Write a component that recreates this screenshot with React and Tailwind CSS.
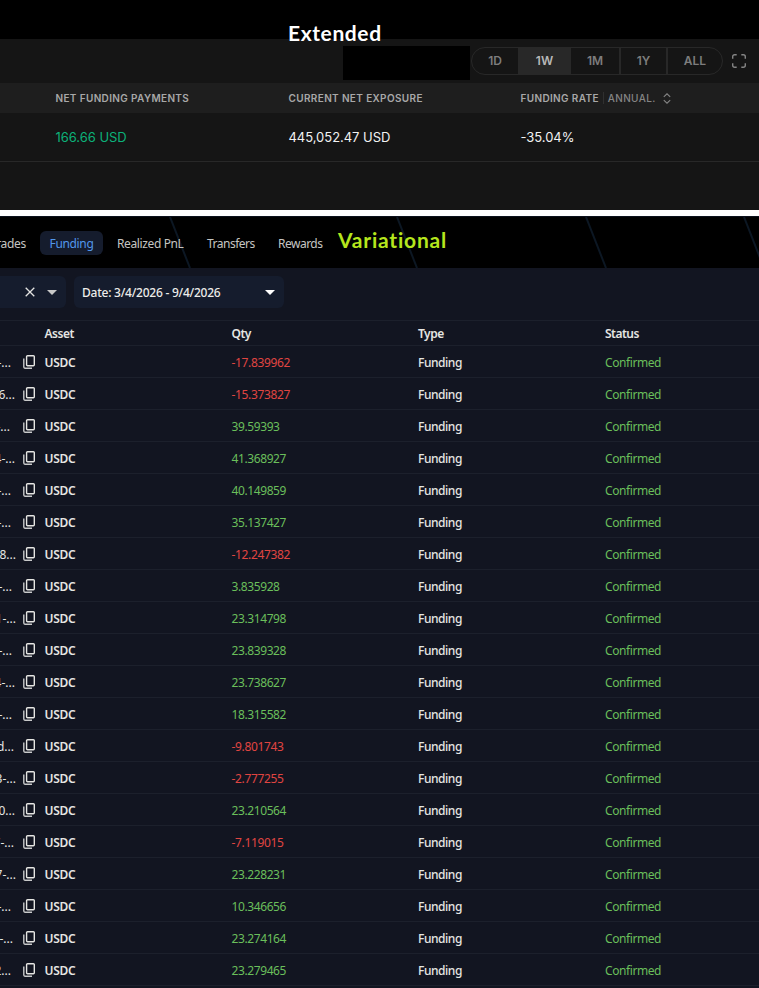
import React from "react";

const ranges = [
  { label: "1D", width: "w-[46px]" },
  { label: "1W", width: "w-[53px]" },
  { label: "1M", width: "w-[48px]" },
  { label: "1Y", width: "w-[47px]" },
  { label: "ALL", width: "w-[56px]" },
];

// end = where the truncated id stops inside its column
const rows = [
  { id: "-...", end: 11, qty: "-17.839962" },
  { id: "6...", end: 15, qty: "-15.373827" },
  { id: "-...", end: 10, qty: "39.59393" },
  { id: "4-...", end: 15, qty: "41.368927" },
  { id: "-...", end: 11, qty: "40.149859" },
  { id: "-...", end: 11, qty: "35.137427" },
  { id: "8...", end: 16, qty: "-12.247382" },
  { id: "-...", end: 12, qty: "3.835928" },
  { id: "1-...", end: 16, qty: "23.314798" },
  { id: "-...", end: 12, qty: "23.839328" },
  { id: "4-...", end: 15, qty: "23.738627" },
  { id: "-...", end: 12, qty: "18.315582" },
  { id: "d...", end: 14, qty: "-9.801743" },
  { id: "3-...", end: 16, qty: "-2.777255" },
  { id: "0...", end: 15, qty: "23.210564" },
  { id: "7-...", end: 14, qty: "-7.119015" },
  { id: "7-...", end: 16, qty: "23.228231" },
  { id: "-...", end: 11, qty: "10.346656" },
  { id: "-...", end: 13, qty: "23.274164" },
  { id: "2...", end: 11, qty: "23.279465" },
];

function CopyIcon() {
  return (
    <svg className="-mt-[2px]" width="13" height="14" viewBox="0 0 13 14" fill="none">
      <rect x="3.6" y="0.7" width="7.7" height="10" rx="0.9" stroke="#e6e6e3" strokeWidth="1.4" />
      <path d="M0.8 3.5V12.1Q0.8 13.2 1.9 13.2H9" stroke="#c8c9ca" strokeWidth="1.4" />
    </svg>
  );
}

function Caret({ className }) {
  return (
    <svg className={className} width="10" height="5" viewBox="0 0 10 5" fill="currentColor">
      <path d="M0 0H10L5 5Z" />
    </svg>
  );
}

function ExtendedPanel() {
  return (
    <section className="h-[210px] bg-[#151515] font-['Inter',sans-serif]">
      <div className="h-[39px] bg-black pl-[288px] pt-[19px]">
        <h2 className="font-['Lato',sans-serif] text-[21px] leading-[27px] font-bold tracking-[0.6px] text-white relative">
          Extended
        </h2>
      </div>

      {/* Range selector */}
      <div className="h-[44px] pt-[7px] flex items-start pl-[343px]">
        <div className="w-[127px] h-[34px] bg-black shrink-0" />
        <div className="ml-px mt-px w-[252px] h-[28px] shrink-0 flex border border-[#282828] rounded-full overflow-hidden">
          {ranges.map((range, i) => (
            <div
              key={range.label}
              className={`${range.width} h-full flex items-center justify-center text-[12px] font-semibold ${
                range.label === "1W"
                  ? "bg-[#282828] text-[#b8b8b8]"
                  : "text-[#7d7d7d]"
              } ${i > 2 ? "border-l-2 border-[#282828]" : ""}`}
            >
              {range.label}
            </div>
          ))}
        </div>
        <svg className="ml-[9px] mt-[8px] shrink-0" width="14" height="14" viewBox="0 0 14 14" fill="none" stroke="#858585" strokeWidth="1.4">
          <path d="M0.7 4.7V2.7Q0.7 0.7 2.7 0.7H4.7M9.3 0.7H11.3Q13.3 0.7 13.3 2.7V4.7M13.3 9.3V11.3Q13.3 13.3 11.3 13.3H9.3M4.7 13.3H2.7Q0.7 13.3 0.7 11.3V9.3" />
        </svg>
      </div>

      <div className="h-[30px] bg-[#1e1e1e] grid grid-cols-[233px_232px_1fr] items-center pl-[55.5px] text-[10px] font-semibold tracking-[0.36px] text-[#a8a8a8] whitespace-nowrap">
        <span>NET FUNDING PAYMENTS</span>
        <span>CURRENT NET EXPOSURE</span>
        <div className="flex items-center">
          <span>FUNDING RATE</span>
          <span className="ml-[4px] w-px h-[12px] bg-[#303030]" />
          <span className="ml-[4px] font-medium text-[#858585]">ANNUAL.</span>
          <svg className="ml-[7px]" width="8" height="11" viewBox="0 0 8 11" fill="none" stroke="#858585" strokeWidth="1.1">
            <path d="M0.8 3.8L4 0.8L7.2 3.8M0.8 7.2L4 10.2L7.2 7.2" />
          </svg>
        </div>
      </div>

      <div className="h-[49px] border-b border-[#282828] grid grid-cols-[233px_232px_1fr] items-center pl-[55.5px] pt-[2px] text-[13px] tracking-[-0.04px] text-[#f2f2f2]">
        <span className="text-[#0cb27a]">166.66 USD</span>
        <span>445,052.47 USD</span>
        <span>-35.04%</span>
      </div>
    </section>
  );
}

function Tabs() {
  return (
    <div className="relative h-[52px] border-t border-[#0b111c] bg-black overflow-hidden">
      <svg className="absolute inset-0" width="759" height="51" viewBox="0 0 759 51" stroke="#0c1723" strokeWidth="2">
        <path d="M170 0L190 51M397 0L417 51M586 0L606 51M744 0L764 51" />
      </svg>
      <nav className="relative h-[24px] mt-[14px] flex items-center text-[12px] text-[#c5c5c2] whitespace-nowrap">
        <span className="w-[26px] pt-[2px] flex justify-end tracking-[-0.3px]">Trades</span>
        <span className="ml-[14px] w-[63px] h-[24px] pt-[2px] rounded-md bg-[#151c2d] text-[#5297eb] tracking-[-0.35px] flex items-center justify-center">
          Funding
        </span>
        <span className="ml-[14px] pt-[2px] w-[90px] tracking-[-0.38px]">Realized PnL</span>
        <span className="w-[71px] pt-[2px] tracking-[-0.5px]">Transfers</span>
        <span className="w-[60px] pt-[2px] tracking-[-0.5px]">Rewards</span>
        <span className="-mt-[7px] font-['Lato',sans-serif] text-[21px] leading-[27px] font-bold tracking-[0.8px] text-[#b5e61d]">
          Variational
        </span>
      </nav>
    </div>
  );
}

function VariationalPanel() {
  return (
    <section className="h-[772px] bg-[#121521] font-['Noto_Sans',sans-serif] overflow-hidden">
      <Tabs />

      {/* Filters */}
      <div className="h-[52px] flex items-start pt-[8px]">
        <div className="w-[66px] h-[32px] rounded-r-md bg-[#151c2d] flex items-center pl-[25px]">
          <svg width="10" height="10" viewBox="0 0 10 10" stroke="#e4e4e2" strokeWidth="1.3">
            <path d="M0.7 0.7L9.3 9.3M9.3 0.7L0.7 9.3" />
          </svg>
          <Caret className="ml-[12px] text-[#c8c8c8]" />
        </div>
        <div className="ml-[8px] w-[210px] h-[32px] rounded-md bg-[#151c2d] flex items-center justify-between pl-[8px] pr-[9px] text-[12px] text-[#ededea]">
          <span className="pt-[2px] tracking-[-0.24px] font-medium">Date: 3/4/2026 - 9/4/2026</span>
          <Caret className="text-white" />
        </div>
      </div>

      <div className="h-[26px] pt-[2px] border-y border-[#1c202c] grid grid-cols-[44.5px_187px_186.5px_187px_1fr] items-center text-[12px] leading-[20px] font-semibold tracking-[-0.5px] text-[#e6e6e3]">
        <span />
        <span>Asset</span>
        <span>Qty</span>
        <span>Type</span>
        <span>Status</span>
      </div>

      {rows.map((row, i) => (
        <div
          key={i}
          className="h-[32px] border-b border-[#1c202c] grid grid-cols-[44.5px_187px_186.5px_187px_1fr] items-center pt-[3px] text-[12px] text-[#e6e6e3]"
        >
          <div className="flex items-center">
            <div className="w-[23px] shrink-0">
              <div className="flex justify-end whitespace-nowrap" style={{ width: row.end }}>
                {row.id}
              </div>
            </div>
            <CopyIcon />
          </div>
          <span className="font-semibold tracking-[-0.25px]">USDC</span>
          <span className={row.qty.startsWith("-") ? "text-[#e04541] tracking-[-0.35px]" : "text-[#6abf5b] tracking-[-0.4px]"}>
            {row.qty}
          </span>
          <span className="font-medium tracking-[-0.45px]">Funding</span>
          <span className="text-[#6abf5b] tracking-[-0.42px]">Confirmed</span>
        </div>
      ))}
    </section>
  );
}

function App() {
  return (
    <div className="w-[759px] h-[988px] overflow-hidden bg-white">
      <ExtendedPanel />
      <div className="h-[6px] bg-white" />
      <VariationalPanel />
    </div>
  );
}

export default App;
